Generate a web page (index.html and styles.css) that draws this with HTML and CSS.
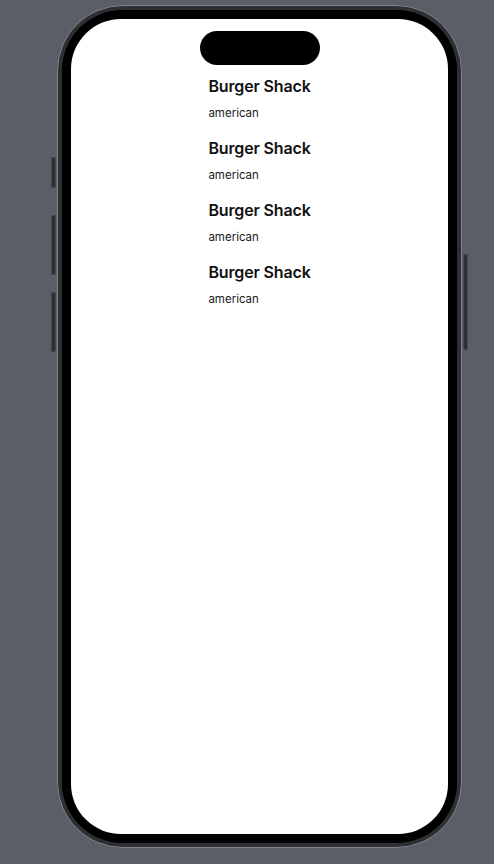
FILE: index.html
```html
<!DOCTYPE html>
<html lang="en">
<head>
<meta charset="utf-8">
<title>Restaurants</title>
<link rel="stylesheet" href="styles.css">
</head>
<body>
<div class="stage">
  <div class="phone">
    <span class="btn btn-action"></span>
    <span class="btn btn-volup"></span>
    <span class="btn btn-voldown"></span>
    <span class="btn btn-power"></span>
    <div class="band">
      <div class="bezel">
        <div class="screen">
          <div class="island"></div>
          <div class="list">
            <div class="items">
              <div class="item">
                <div class="name">Burger Shack</div>
                <div class="cuisine">american</div>
              </div>
              <div class="item">
                <div class="name">Burger Shack</div>
                <div class="cuisine">american</div>
              </div>
              <div class="item">
                <div class="name">Burger Shack</div>
                <div class="cuisine">american</div>
              </div>
              <div class="item">
                <div class="name">Burger Shack</div>
                <div class="cuisine">american</div>
              </div>
            </div>
          </div>
        </div>
      </div>
    </div>
  </div>
</div>
</body>
</html>
```
FILE: styles.css
```css
html, body {
  margin: 0;
  padding: 0;
  background: #5a5e66;
  height: 100%;
}

.stage {
  padding: 5px 0 0 57px;
}

.phone {
  position: relative;
  box-sizing: border-box;
  width: 405px;
  height: 843px;
  border-radius: 66px;
  border: 1px solid #80838a;
  background: #2e2f32;
  padding: 4px;
}

.band {
  height: 100%;
  border-radius: 61px;
  background: #000;
  box-sizing: border-box;
}

.bezel {
  height: 100%;
  box-sizing: border-box;
  padding: 9px;
  border-radius: 61px;
  background: #000;
}

.screen {
  height: 100%;
  background: #fff;
  border-radius: 50px;
  box-sizing: border-box;
  padding-top: 12px;
  display: flex;
  flex-direction: column;
  align-items: center;
  overflow: hidden;
}

.island {
  width: 120px;
  height: 34px;
  border-radius: 17px;
  background: #000;
  flex: none;
}

.list {
  margin-top: 11px;
  display: flex;
  justify-content: center;
}

.items {
  display: flex;
  flex-direction: column;
  gap: 18px;
}

.item {
  display: flex;
  flex-direction: column;
  gap: 10px;
}

.name {
  font-family: Inter, "Liberation Sans", sans-serif;
  font-weight: 600;
  font-size: 16px;
  line-height: 20px;
  color: #111;
  letter-spacing: -0.15px;
}

.cuisine {
  font-family: Inter, "Liberation Sans", sans-serif;
  font-weight: 400;
  font-size: 11.5px;
  line-height: 14px;
  color: #1a1a1a;
}

.btn {
  position: absolute;
  width: 5px;
  background: #2f3034;
  border: 1px solid #45474c;
  box-sizing: border-box;
  border-radius: 1px;
}

.btn-action {
  left: -7px;
  top: 151px;
  height: 31px;
}

.btn-volup {
  left: -7px;
  top: 209px;
  height: 60px;
}

.btn-voldown {
  left: -7px;
  top: 286px;
  height: 60px;
}

.btn-power {
  right: -7px;
  top: 248px;
  height: 96px;
}
```
